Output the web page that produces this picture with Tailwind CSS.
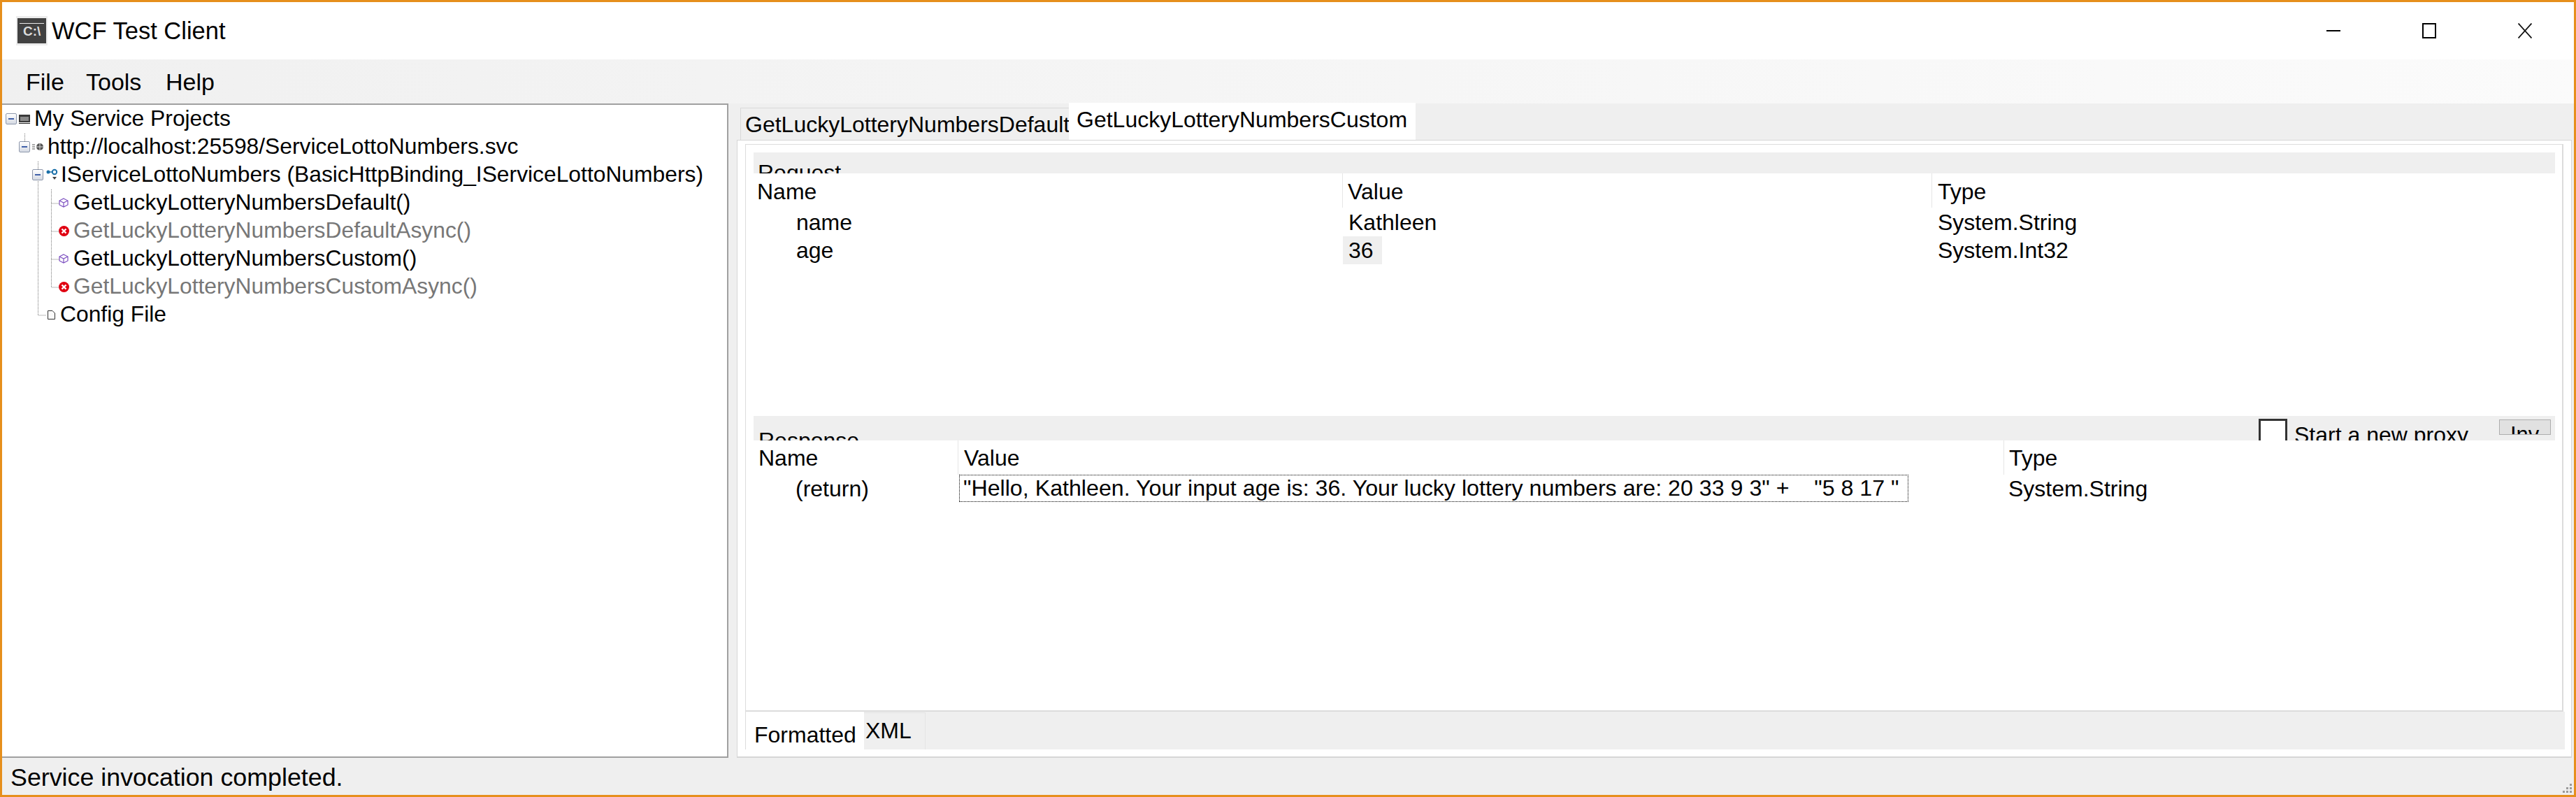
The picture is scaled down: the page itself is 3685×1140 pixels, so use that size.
<!DOCTYPE html>
<html lang="en">
<head>
	<meta charset="UTF-8">
	<title>WCF Test Client</title>
	<script src="https://cdn.jsdelivr.net/npm/@tailwindcss/browser@4"></script>
</head>
<body class="bg-white">
	<div class="flex flex-col w-[3685px] h-[1140px] overflow-hidden border-[3px] border-[#e68f1c] bg-white text-black text-[32px] leading-none font-['Liberation_Sans',sans-serif]">

		<!-- title bar -->
		<div class="flex items-center h-[82px] shrink-0 pl-[20px]">
			<svg class="w-[45px] h-[42px] mr-[6px]" viewBox="0 0 45 42">
				<rect x="0" y="0" width="45" height="42" fill="#ececec"/>
				<rect x="2" y="3" width="41" height="36" fill="#414141"/>
				<rect x="5" y="10" width="35" height="1" fill="#e8e8e8"/>
				<text x="10" y="28" font-size="19" font-weight="700" fill="#dcdcdc" font-family="Liberation Sans">C:\</text>
			</svg>
			<span class="text-[34.5px]">WCF Test Client</span>
			<div class="ml-auto flex items-center pr-[60px] gap-[117px]">
				<svg class="w-[20px] h-[24px]" viewBox="0 0 20 24"><rect y="11" width="20" height="2" fill="#000"/></svg>
				<svg class="w-[20px] h-[22px]" viewBox="0 0 20 22"><rect x="1" y="1" width="18" height="20" fill="none" stroke="#000" stroke-width="2"/></svg>
				<svg class="w-[20px] h-[22px]" viewBox="0 0 20 22"><path d="M0.5 0.5 L19.5 21.5 M19.5 0.5 L0.5 21.5" stroke="#111" stroke-width="1.8" fill="none"/></svg>
			</div>
		</div>

		<!-- menu bar -->
		<div class="flex items-center h-[63px] shrink-0 pl-[34px] pt-[1px] text-[34px] bg-gradient-to-r from-[#f0f0f0] to-[#fbfbfb]">
			<span class="w-[86px]">File</span>
			<span class="w-[114px]">Tools</span>
			<span>Help</span>
		</div>

		<!-- split area -->
		<div class="flex flex-1 min-h-0 bg-[#efefef]">

			<!-- tree -->
			<div class="relative w-[1039px] shrink-0 h-[936px] bg-white border-t-2 border-b-2 border-r-2 border-[#a0a0a0] text-[31.8px]">
				<svg class="absolute left-0 top-0 w-[100px] h-[320px]" viewBox="0 0 100 320" fill="none" stroke="#777" stroke-width="1" stroke-dasharray="1 1">
					<path d="M32.5 41 V52 M51.5 81 V301 H63 M70.5 121 V261 H82 M70.5 141 H82 M70.5 181 H82 M70.5 221 H82"/>
				</svg>
				<div class="flex items-center h-[40px] pl-[5px]">
					<span class="relative w-[16px] h-[16px] rounded-[2px] border border-[#8d97ab] bg-gradient-to-b from-white to-[#d5dae3] mr-[3px]"><span class="absolute left-[3px] right-[3px] top-[6px] h-[2px] bg-[#3f5fa8]"></span></span>
					<svg class="w-[16px] h-[14px] mr-[6px]" viewBox="0 0 16 14"><rect x="0" y="1" width="16" height="11" fill="#3a3a3a"/><rect x="2" y="4" width="12" height="6" fill="#8a8a8a"/><rect y="13" width="16" height="1" fill="#222"/></svg>
					<span>My Service Projects</span>
				</div>
				<div class="flex items-center h-[40px] pl-[24px]">
					<span class="relative w-[16px] h-[16px] rounded-[2px] border border-[#8d97ab] bg-gradient-to-b from-white to-[#d5dae3] mr-[3px]"><span class="absolute left-[3px] right-[3px] top-[6px] h-[2px] bg-[#3f5fa8]"></span></span>
					<svg class="w-[18px] h-[14px] mr-[4px]" viewBox="0 0 18 14"><path d="M0 4 H4 M0 7 H4 M0 10 H4" stroke="#555" stroke-width="1"/><circle cx="11" cy="7" r="5" fill="#555"/><path d="M6 7 H16 M11 2 V12" stroke="#ddd" stroke-width="1"/></svg>
					<span>http://localhost:25598/ServiceLottoNumbers.svc</span>
				</div>
				<div class="flex items-center h-[40px] pl-[43px]">
					<span class="relative w-[16px] h-[16px] rounded-[2px] border border-[#8d97ab] bg-gradient-to-b from-white to-[#d5dae3] mr-[3px]"><span class="absolute left-[3px] right-[3px] top-[6px] h-[2px] bg-[#3f5fa8]"></span></span>
					<svg class="w-[18px] h-[18px] mr-[4px]" viewBox="0 0 18 18"><circle cx="4" cy="5" r="2.5" fill="#1a6fa8"/><path d="M6 5 H10" stroke="#1a6fa8" stroke-width="1.5"/><circle cx="13" cy="5" r="3.2" fill="none" stroke="#1a6fa8" stroke-width="2"/><path d="M10 12 H16 L13 16 Z" fill="#444"/></svg>
					<span>IServiceLottoNumbers (BasicHttpBinding_IServiceLottoNumbers)</span>
				</div>
				<div class="flex items-center h-[40px] pl-[81px]">
					<svg class="w-[14px] h-[14px] mr-[7px]" viewBox="0 0 14 14" fill="none" stroke="#7c4fc0" stroke-width="1.2"><path d="M7 1 L13 4 V10 L7 13 L1 10 V4 Z M1 4 L7 7 L13 4 M7 7 V13"/></svg>
					<span>GetLuckyLotteryNumbersDefault()</span>
				</div>
				<div class="flex items-center h-[40px] pl-[81px] text-[#777]">
					<svg class="w-[15px] h-[15px] mr-[6px]" viewBox="0 0 15 15"><circle cx="7.5" cy="7.5" r="7.5" fill="#e00012"/><path d="M4.5 4.5 L10.5 10.5 M10.5 4.5 L4.5 10.5" stroke="#fff" stroke-width="2.4"/></svg>
					<span>GetLuckyLotteryNumbersDefaultAsync()</span>
				</div>
				<div class="flex items-center h-[40px] pl-[81px]">
					<svg class="w-[14px] h-[14px] mr-[7px]" viewBox="0 0 14 14" fill="none" stroke="#7c4fc0" stroke-width="1.2"><path d="M7 1 L13 4 V10 L7 13 L1 10 V4 Z M1 4 L7 7 L13 4 M7 7 V13"/></svg>
					<span>GetLuckyLotteryNumbersCustom()</span>
				</div>
				<div class="flex items-center h-[40px] pl-[81px] text-[#777]">
					<svg class="w-[15px] h-[15px] mr-[6px]" viewBox="0 0 15 15"><circle cx="7.5" cy="7.5" r="7.5" fill="#e00012"/><path d="M4.5 4.5 L10.5 10.5 M10.5 4.5 L4.5 10.5" stroke="#fff" stroke-width="2.4"/></svg>
					<span>GetLuckyLotteryNumbersCustomAsync()</span>
				</div>
				<div class="flex items-center h-[40px] pl-[65px]">
					<svg class="w-[11px] h-[13px] mr-[7px]" viewBox="0 0 11 13"><path d="M0.5 0.5 H7 L10.5 4 V12.5 H0.5 Z" fill="#fafafa" stroke="#333" stroke-width="1"/></svg>
					<span>Config File</span>
				</div>
			</div>

			<!-- right pane -->
			<div class="flex-1 min-w-0 flex flex-col pl-[12px] h-[936px]">
				<div class="flex items-end h-[52px] shrink-0 pl-[5px]">
					<div class="w-[470px] h-[46px] overflow-hidden pl-[6px] pt-[7px] whitespace-nowrap bg-[#efefef] border-t border-l border-[#d9d9d9]">GetLuckyLotteryNumbersDefault</div>
					<div class="w-[496px] h-[53px] pl-[11px] pt-[8px] bg-white whitespace-nowrap">GetLuckyLotteryNumbersCustom</div>
				</div>
				<div class="flex-1 min-h-0 w-[2625px] flex flex-col bg-white border border-[#d6d6d6] border-b-2 pt-[5px] pl-[11px] pr-[11px] pb-[10px]">
					<div class="flex-1 min-h-0 flex flex-col border-t border-l border-[#dcdcdc]">
						<div class="flex-1 min-h-0 relative pt-[11px] pl-[11px] pr-[10px] border-r-2 border-b-2 border-[#dcdcdc]">

							<!-- request -->
							<div class="h-[30px] overflow-hidden bg-[#efefef] pl-[6px] pt-[13px]">Request</div>
							<div class="relative h-[347px]">
								<div class="flex h-[49px] pt-[10px]">
									<span class="w-[842px] pl-[5px]">Name</span>
									<span class="w-[843px] pl-[7px] border-l border-[#e6e6e6] -mt-[10px] pt-[10px]">Value</span>
									<span class="pl-[8px] border-l border-[#e6e6e6] -mt-[10px] pt-[10px]">Type</span>
								</div>
								<div class="flex items-center h-[41px]">
									<span class="w-[842px] pl-[61px]">name</span>
									<span class="w-[843px] pl-[9px]">Kathleen</span>
									<span class="pl-[9px]">System.String</span>
								</div>
								<div class="flex items-center h-[40px]">
									<span class="w-[842px] pl-[61px]">age</span>
									<span class="w-[843px] pl-[1px]"><span class="flex items-center w-[56px] h-[40px] pl-[8px] bg-[#efefef]">36</span></span>
									<span class="pl-[9px]">System.Int32</span>
								</div>
							</div>

							<!-- response -->
							<div class="relative h-[35px] overflow-hidden bg-[#efefef] pl-[7px] pt-[19px]">
								<span>Response</span>
								<div class="absolute left-[2153px] top-[4px] w-[41px] h-[41px] border-[3px] border-[#333] bg-white"></div>
								<span class="absolute left-[2204px] top-[11px] whitespace-nowrap">Start a new proxy</span>
								<div class="absolute left-[2497px] top-[5px] w-[74px] h-[22px] overflow-hidden bg-[#e1e1e1] border border-[#adadad] pl-[15px] pt-[5px] text-[31px]">Inv</div>
							</div>
							<div>
								<div class="flex h-[49px] pt-[9px]">
									<span class="w-[292px] pl-[7px]">Name</span>
									<span class="w-[1496px] pl-[8px] border-l border-[#e6e6e6] -mt-[9px] pt-[9px]">Value</span>
									<span class="pl-[7px] border-l border-[#e6e6e6] -mt-[9px] pt-[9px]">Type</span>
								</div>
								<div class="flex items-center h-[39px]">
									<span class="w-[294px] pl-[60px]">(return)</span>
									<span class="flex items-center w-[1358px] h-[39px] pl-[5px] -mr-[1358px] border border-dotted border-black whitespace-pre overflow-hidden text-[32.2px]">"Hello, Kathleen. Your input age is: 36. Your lucky lottery numbers are: 20 33 9 3" +    "5 8 17 "</span>
									<span class="ml-[1501px]">System.String</span>
								</div>
							</div>
						</div>

						<!-- formatted / xml tabs -->
						<div class="flex h-[54px] shrink-0 bg-[#efefef] mr-[-2px]">
							<div class="w-[169px] bg-white pl-[12px] pt-[17px]">Formatted</div>
							<div class="w-[88px] pl-[2px] pt-[9px] mt-[1px] border-t border-r border-[#e4e4e4]">XML</div>
						</div>
					</div>
				</div>
			</div>
		</div>

		<!-- status bar -->
		<div class="relative flex items-center h-[52px] shrink-0 bg-[#efefef] pl-[12px] pt-[4px] text-[35.8px]">
			Service invocation completed.
			<svg class="absolute right-[2px] bottom-[2px] w-[14px] h-[14px]" viewBox="0 0 14 14" fill="#9a9a9a"><rect x="10" y="0" width="3" height="3"/><rect x="5" y="5" width="3" height="3"/><rect x="10" y="5" width="3" height="3"/><rect x="0" y="10" width="3" height="3"/><rect x="5" y="10" width="3" height="3"/><rect x="10" y="10" width="3" height="3"/></svg>
		</div>
	</div>
</body>
</html>
